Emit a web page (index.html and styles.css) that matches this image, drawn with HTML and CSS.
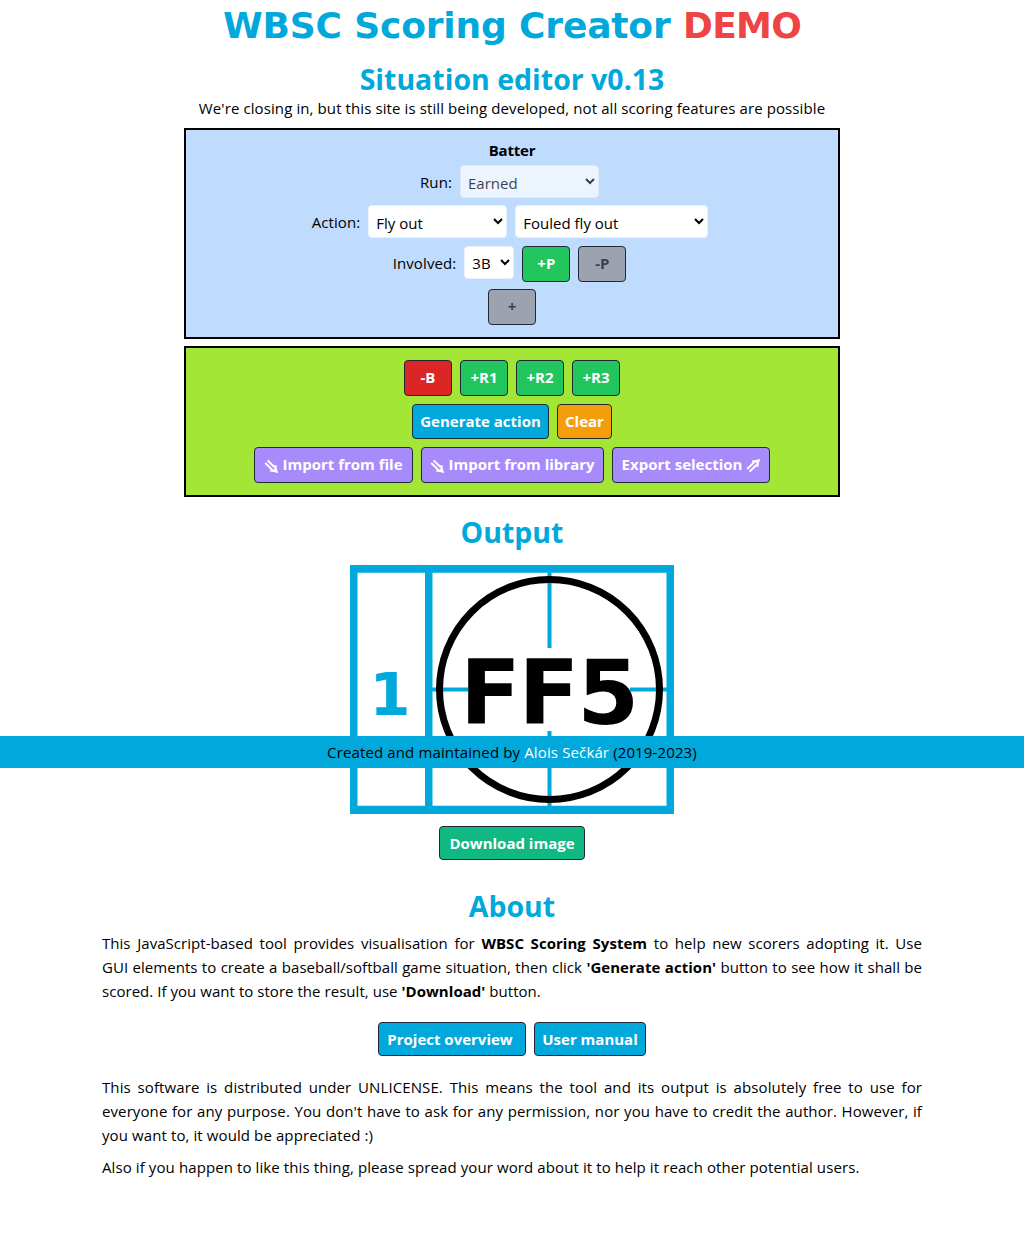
FILE: index.html
```html
<!DOCTYPE html>
<html lang="en">
<head>
<meta charset="utf-8">
<title>WBSC Scoring Creator</title>
<link rel="stylesheet" href="styles.css">
</head>
<body>
<main class="page">
  <h1 class="title">WBSC Scoring Creator <span class="demo">DEMO</span></h1>
  <h2 class="heading heading-editor">Situation editor v0.13</h2>
  <p class="notice">We're closing in, but this site is still being developed, not all scoring features are possible</p>

  <section class="panel panel-batter">
    <div class="batter-name">Batter</div>
    <div class="row row-run"><label class="label">Run:</label><select class="select w-action" disabled><option>Earned</option></select></div>
    <div class="row row-action"><label class="label">Action:</label><select class="select w-action"><option>Fly out</option></select><select class="select w-detail"><option>Fouled fly out</option></select></div>
    <div class="row row-involved"><label class="label">Involved:</label><select class="select w-pos"><option>3B</option></select><button class="btn small green">+P</button><button class="btn small gray" disabled>-P</button></div>
    <div class="row row-add"><button class="btn small gray" disabled>+</button></div>
  </section>

  <section class="panel panel-controls">
    <div class="row"><button class="btn small red">-B</button><button class="btn small green">+R1</button><button class="btn small green">+R2</button><button class="btn small green">+R3</button></div>
    <div class="row"><button class="btn blue w-generate">Generate action</button><button class="btn orange w-clear">Clear</button></div>
    <div class="row">
      <button class="btn tall purple w-file"><svg class="arrow" viewBox="0 0 14 14"><path d="M3.6 1.4 10.4 8M1.2 4 8 10.6"/><path class="head" d="M11.4 6.2Q11.2 9.5 12.4 12.4 9.6 11.2 6.2 11.6"/></svg>Import from file</button>
      <button class="btn tall purple w-library"><svg class="arrow" viewBox="0 0 14 14"><path d="M3.6 1.4 10.4 8M1.2 4 8 10.6"/><path class="head" d="M11.4 6.2Q11.2 9.5 12.4 12.4 9.6 11.2 6.2 11.6"/></svg>Import from library</button>
      <button class="btn tall purple w-export">Export selection<svg class="arrow" viewBox="0 0 14 14"><path d="M1.2 10 8 3.4M3.6 12.6 10.4 6"/><path class="head" d="M6.2 2.4Q9.6 2.8 12.4 1.6 11.2 4.5 11.4 7.8"/></svg></button>
    </div>
  </section>

  <h2 class="heading heading-output">Output</h2>
  <svg class="output" width="324" height="249" viewBox="0 0 324 249">
    <rect width="324" height="249" fill="#00a8dc"/>
    <path fill="#fff" d="M7.5 7.8h67.5v233H7.5zM82.5 7.8h234v233h-234z"/>
    <path fill="none" stroke="#00a8dc" stroke-width="4" d="M199.5 7v76M199.5 166v76M82 124.5h36M280 124.5h37"/>
    <circle cx="199.5" cy="124.5" r="110" fill="none" stroke="#000" stroke-width="7"/>
    <text class="inning" x="19.5" y="149.5">1</text>
    <text class="play" x="110" y="158.5">FF5</text>
  </svg>
  <button class="btn emerald short w-download">Download image</button>

  <h2 class="heading heading-about">About</h2>
  <div class="about">
    <p class="intro">This JavaScript-based tool provides visualisation for <b>WBSC Scoring System</b> to help new scorers adopting it. Use GUI&nbsp;elements to create a baseball/softball game situation, then click <b>'Generate action'</b> button to see how it shall be scored. If you want to store the result, use <b>'Download'</b> button.</p>
    <div class="row links"><button class="btn blue short w-overview">Project overview</button><button class="btn blue short w-manual">User manual</button></div>
    <p>This software is distributed under UNLICENSE. This means the tool and its output is absolutely free to use for everyone for any purpose. You don't have to ask for any permission, nor you have to credit the author. However, if you want to, it would be appreciated :)</p>
    <p class="last">Also if you happen to like this thing, please spread your word about it to help it reach other potential users.</p>
  </div>
</main>
<footer class="footer"><span>Created and maintained by <a class="author">Alois Sečkár</a> (2019-2023)</span></footer>
</body>
</html>
```
FILE: styles.css
```css
* { box-sizing: border-box; margin: 0; padding: 0; }
body { position: relative; min-height: 1242px; background: #fff; color: #000; font: 15px/24px "Open Sans", "Noto Sans", sans-serif; letter-spacing: .1px; }
.page { display: flex; flex-direction: column; align-items: center; }
.title { height: 48px; color: #00a8dc; font: bold 36px/51px "DejaVu Sans", sans-serif; letter-spacing: -.15px; white-space: nowrap; }
.demo { color: #ef4444; letter-spacing: -.7px; }
.heading { color: #00a8dc; font-size: 28.5px; line-height: 36px; font-weight: 700; letter-spacing: 0; white-space: nowrap; }
.heading-editor { margin-top: 13px; }
.notice { margin-top: -1px; white-space: nowrap; }
.panel { width: 656px; border: 2px solid #000; display: flex; flex-direction: column; align-items: center; }
.panel-batter { margin-top: 8px; height: 211px; padding-top: 8px; background: #bfdbfe; }
.panel-controls { margin-top: 7px; height: 151px; padding-top: 12px; gap: 8px; background: #a3e635; }
.batter-name { font-weight: 700; line-height: 24px; letter-spacing: -.2px; }
.row { display: flex; justify-content: center; align-items: flex-start; gap: 8px; white-space: nowrap; }
.row-run { margin-top: 3px; padding-right: 5px; }
.row-action { margin-top: 7px; padding-right: 4px; }
.row-involved { margin-top: 8px; padding-right: 5px; }
.row-add { margin-top: 7px; }
.label { line-height: 35px; height: 33px; }
.select { height: 33px; padding: 3px 0 0 3px; border: 1px solid #e8f2ff; border-radius: 4px; background: #fff; color: #000; font: 15px "Open Sans", sans-serif; letter-spacing: 0; }
.select:disabled { opacity: .7; }
.w-action { width: 139px; }
.w-detail { width: 193px; }
.w-pos { width: 50px; padding-top: 1px; }
.btn { display: flex; align-items: center; justify-content: center; gap: 4px; height: 35px; padding-bottom: 2px; border: 1px solid #1f2937; border-radius: 4px; color: #fff; font: bold 15px/24px "Open Sans", sans-serif; white-space: nowrap; }
.small { width: 48px; height: 36px; }
.tall { height: 36px; }
.short { height: 34px; padding-bottom: 0; }
.green { background: #22c55e; }
.gray { background: #9ca3af; color: #374151; }
.red { background: #dc2626; }
.blue { background: #00a8dc; }
.orange { background: #f59e0b; }
.purple { background: #a78bfa; }
.emerald { background: #10b981; }
.w-generate { width: 137px; }
.w-clear { width: 55px; }
.w-file { width: 159px; }
.w-library { width: 183px; }
.w-export { width: 158px; }
.w-download { width: 146px; }
.w-overview { width: 148px; padding-right: 4px; }
.w-manual { width: 112px; }
.arrow { width: 14px; height: 14px; margin-top: 3px; flex: none; fill: none; stroke: #fff; stroke-width: 2; }
.head { stroke-width: 2.4; }
.heading-output { margin-top: 17px; }
.output { margin-top: 15px; display: block; letter-spacing: 0; }
.inning { font: bold 59px "DejaVu Sans", sans-serif; fill: #00a8dc; }
.play { font: bold 89px "DejaVu Sans", sans-serif; letter-spacing: -2.2px; }
.w-download { margin-top: 12px; }
.heading-about { margin-top: 28px; }
.about { width: 820px; margin-top: 7px; text-align: justify; }
.intro { letter-spacing: .04px; }
.links { margin: 19px 0 19px; }
.last { margin-top: 8px; }
.footer { position: absolute; top: 736px; left: 0; width: 100%; height: 32px; display: flex; justify-content: center; background: #00a8dc; line-height: 32px; letter-spacing: .13px; white-space: nowrap; }
.author { color: #fff; }
```
